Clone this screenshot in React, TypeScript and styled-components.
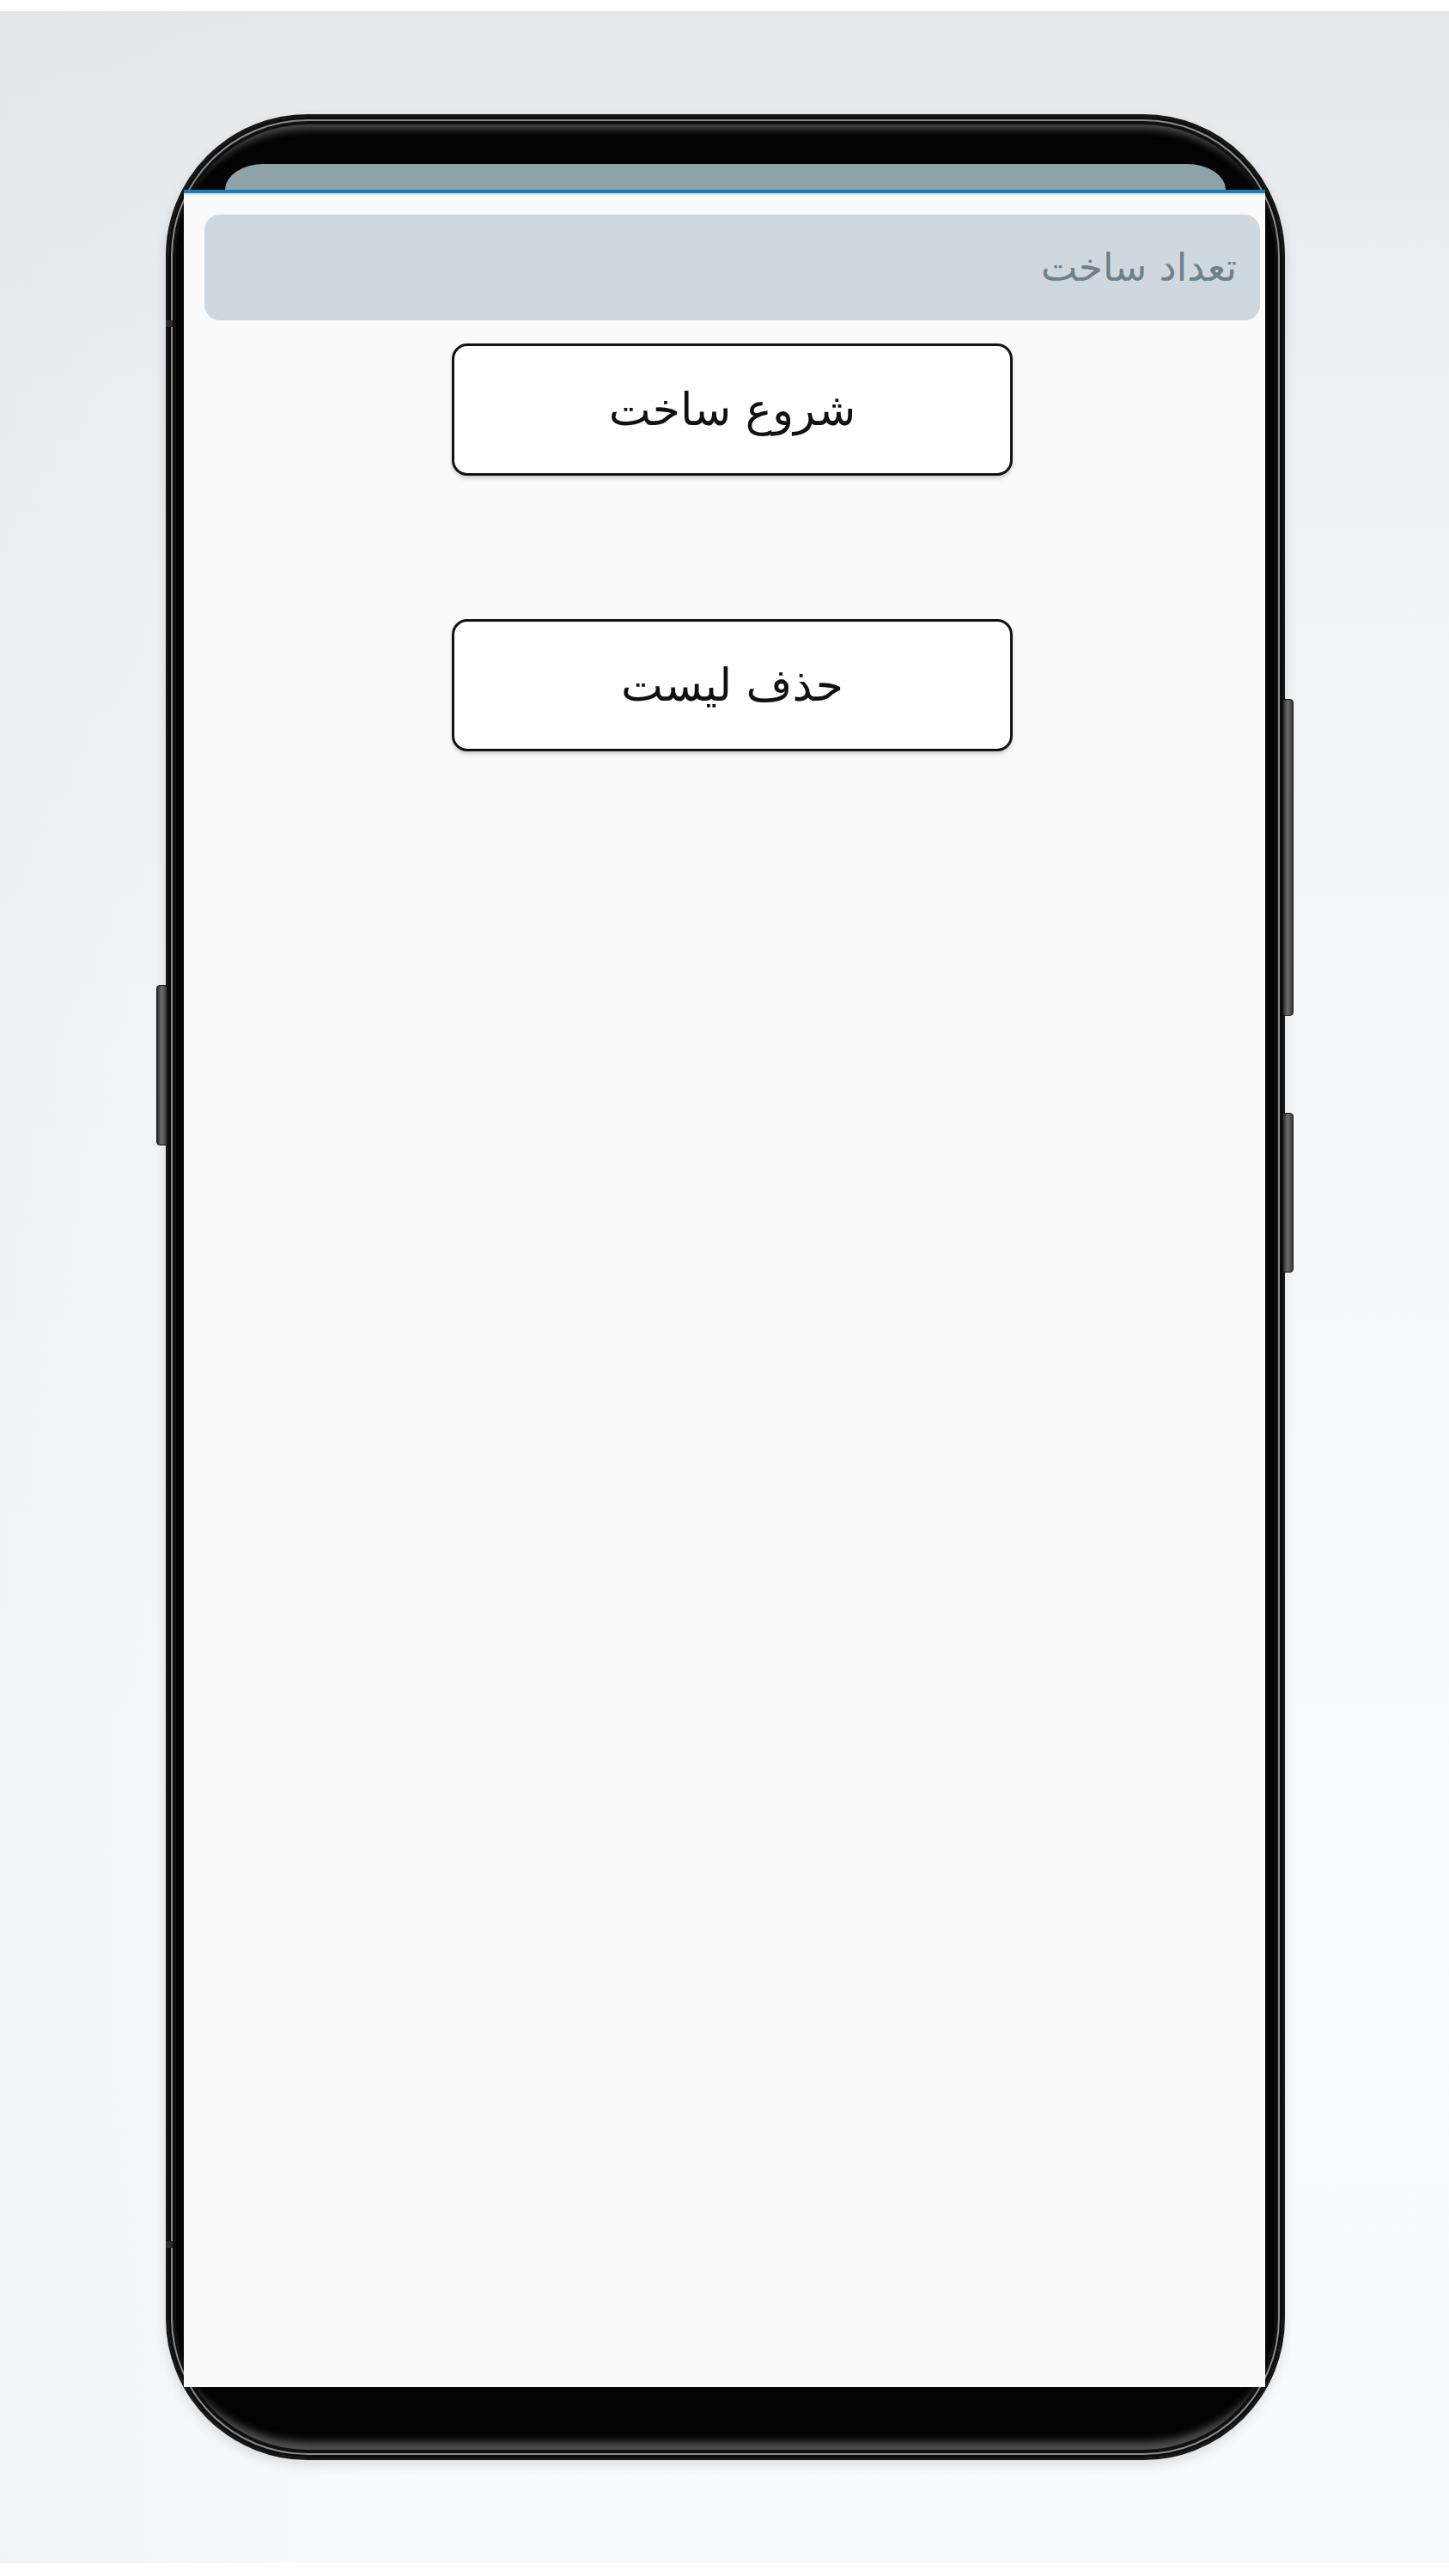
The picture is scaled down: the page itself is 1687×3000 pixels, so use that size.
import React from 'react';
import styled, { createGlobalStyle } from 'styled-components';

const GlobalStyle = createGlobalStyle`
  html, body {
    margin: 0;
    padding: 0;
    background: #ffffff;
  }

  body {
    font-family: 'DejaVu Sans', 'Noto Sans', sans-serif;
  }
`;

const Page = styled.div`
  width: 1687px;
  height: 3000px;
  padding: 13px 0 15px;
  box-sizing: border-box;
  background: #ffffff;
`;

const Backdrop = styled.div`
  height: 100%;
  padding: 120px 0 0 193px;
  box-sizing: border-box;
  background:
    linear-gradient(90deg, rgba(222, 225, 228, 0.3) 0%, rgba(255, 255, 255, 0) 25%),
    linear-gradient(180deg, #e5e8eb 0%, #eef0f2 15%, #f6f7f9 40%, #fafbfc 70%, #f9fafc 100%);
`;

const Phone = styled.div`
  position: relative;
  width: 1303px;
  height: 2732px;
  box-sizing: border-box;
  padding: 55px 20px 82px 18px;
  display: flex;
  flex-direction: column;
  border-radius: 165px;
  background: #030303;
  border: 3px solid #161616;
  box-shadow:
    inset 0 0 0 3px #0b0b0b,
    inset 0 0 0 5px #8a8a8a,
    inset 0 0 0 9px #101010,
    inset 0 22px 10px -8px #505050,
    inset 0 -28px 10px -10px #505050,
    0 6px 14px rgba(0, 0, 0, 0.12);
`;

const SideKey = styled.div<{ $side: 'left' | 'right'; $top: number; $height: number }>`
  position: absolute;
  top: ${({ $top }) => $top}px;
  ${({ $side }) => ($side === 'left' ? 'left: -14px;' : 'right: -13px;')}
  width: 11px;
  height: ${({ $height }) => $height}px;
  border-radius: ${({ $side }) => ($side === 'left' ? '4px 0 0 4px' : '0 4px 4px 0')};
  background: linear-gradient(90deg, #2a2a2a 0%, #6c6c6c 45%, #3a3a3a 100%);
  border: 1px solid #111;
`;

const AntennaLine = styled.div<{ $top: number }>`
  position: absolute;
  top: ${({ $top }) => $top}px;
  left: -3px;
  width: 8px;
  height: 8px;
  background: #2a2a2a;
`;

const StatusBar = styled.div`
  height: 30px;
  margin: 0 46px 0 48px;
  border-radius: 90px 90px 0 0 / 60px 60px 0 0;
  background: #8fa2aa;
  flex-shrink: 0;
`;

const Screen = styled.div`
  flex: 1;
  position: relative;
  background: #fafafa;
  border-top: 4px solid #1c7cb6;
  box-shadow: inset 0 2px 0 #c9eef5;
  padding: 25px 6px 0 24px;
  display: flex;
  flex-direction: column;
  direction: rtl;
`;

const Header = styled.div`
  height: 123px;
  border-radius: 18px;
  background: #cfd8df;
  display: flex;
  align-items: center;
  padding: 0 27px;
  font-size: 45px;
  color: #6e808a;
`;

const Actions = styled.div`
  display: flex;
  flex-direction: column;
  align-items: center;
  gap: 167px;
  margin-top: 27px;
`;

const ActionButton = styled.button`
  width: 653px;
  height: 154px;
  box-sizing: border-box;
  border: 3px solid #121212;
  border-radius: 18px;
  background: #ffffff;
  box-shadow: 0 3px 5px rgba(0, 0, 0, 0.18);
  font-family: 'DejaVu Sans', 'Noto Sans', sans-serif;
  font-size: 52px;
  color: #111111;
  display: flex;
  align-items: center;
  justify-content: center;
  padding: 0;
  direction: rtl;
`;

const App = () => {
  return (
    <Page>
      <GlobalStyle />
      <Backdrop>
        <Phone>
          <SideKey $side="left" $top={1011} $height={185} />
          <SideKey $side="right" $top={678} $height={367} />
          <SideKey $side="right" $top={1160} $height={184} />
          <AntennaLine $top={237} />
          <AntennaLine $top={2474} />
          <StatusBar />
          <Screen>
            <Header>تعداد ساخت</Header>
            <Actions>
              <ActionButton>شروع ساخت</ActionButton>
              <ActionButton>حذف لیست</ActionButton>
            </Actions>
          </Screen>
        </Phone>
      </Backdrop>
    </Page>
  );
};

export default App;
